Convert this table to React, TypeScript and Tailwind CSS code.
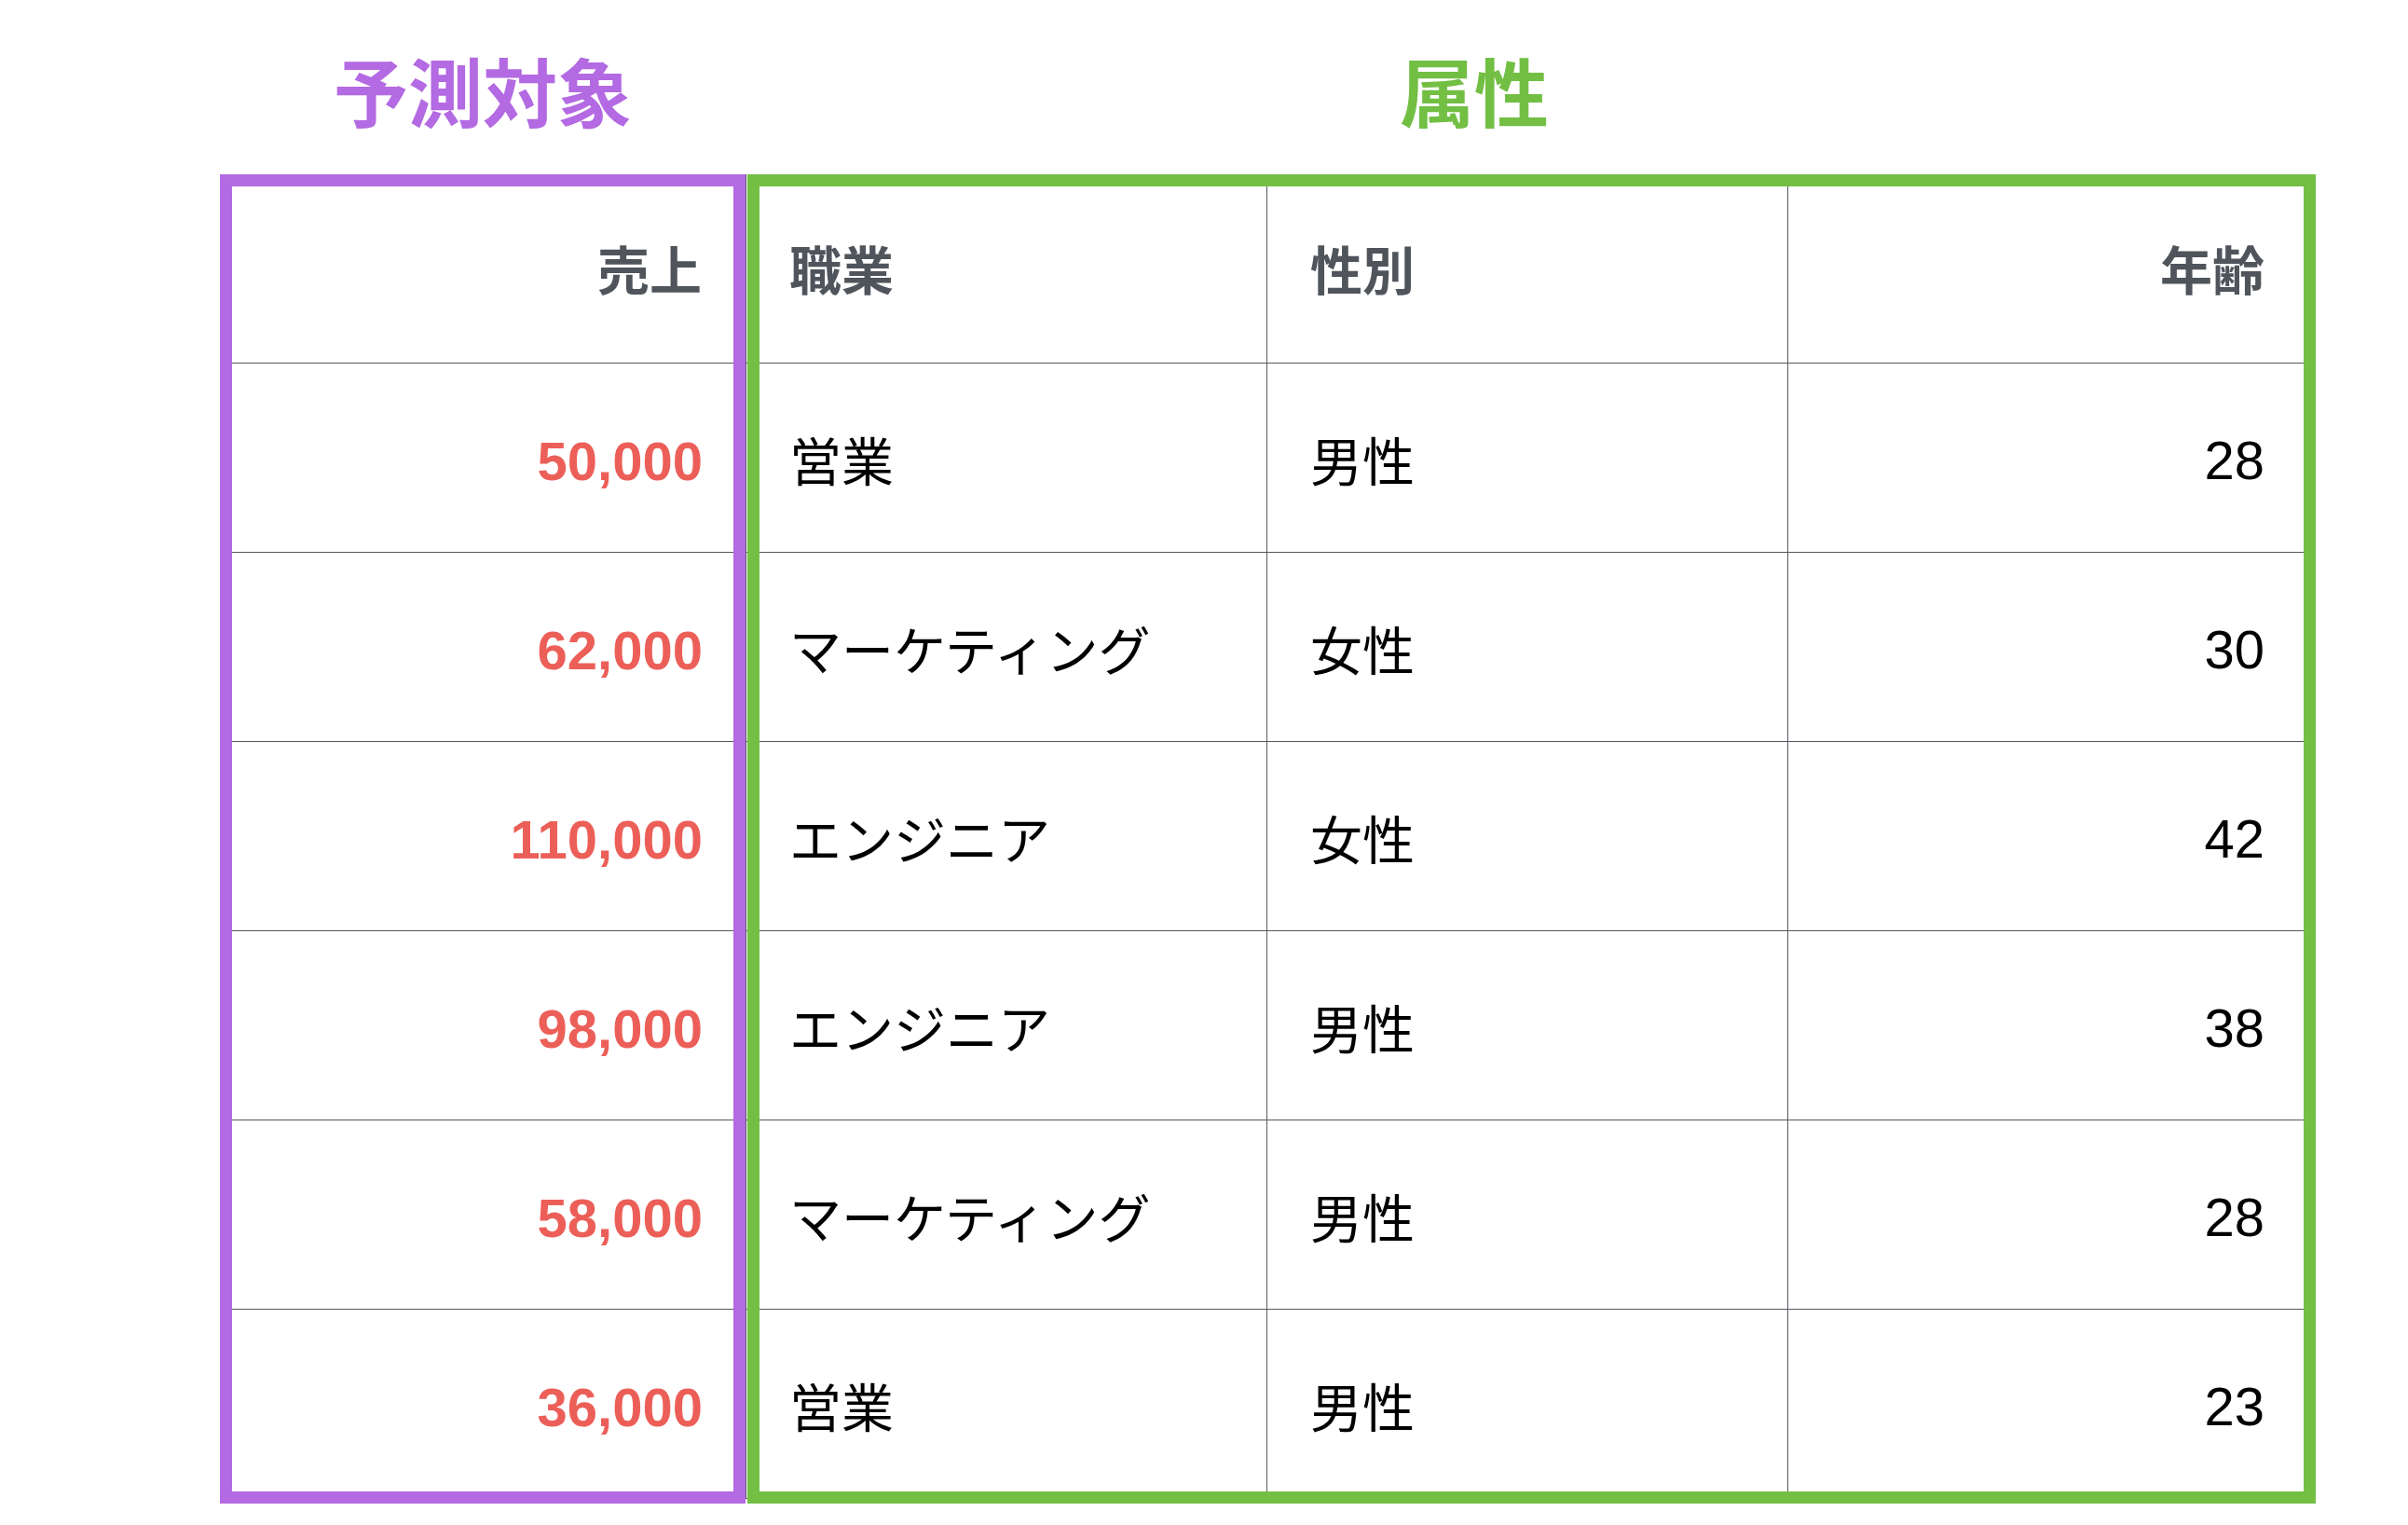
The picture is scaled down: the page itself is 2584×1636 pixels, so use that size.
import React from "react";

type Row = { sales: string; job: string; gender: string; age: string };

const rows: Row[] = [
  { sales: "50,000", job: "営業", gender: "男性", age: "28" },
  { sales: "62,000", job: "マーケティング", gender: "女性", age: "30" },
  { sales: "110,000", job: "エンジニア", gender: "女性", age: "42" },
  { sales: "98,000", job: "エンジニア", gender: "男性", age: "38" },
  { sales: "58,000", job: "マーケティング", gender: "男性", age: "28" },
  { sales: "36,000", job: "営業", gender: "男性", age: "23" },
];

export default function App() {
  return (
    <div className="w-[2584px] h-[1636px] bg-white overflow-hidden font-['Liberation_Sans','Noto_Sans_CJK_JP',sans-serif]">
      {/* titles */}
      <div className="flex ml-[236px] mt-[55px] h-[80px] font-['Noto_Sans_CJK_JP',sans-serif] font-bold text-[80px] leading-[80px]">
        <div className="w-[564px] text-center text-[#b36ae2]">予測対象</div>
        <div className="w-[1564px] text-center text-[#72bf44]">属性</div>
      </div>

      {/* table with highlight frames */}
      <div className="relative ml-[236px] mt-[52px] w-[2249px] h-[1426px]">
        <div className="ml-[5px] mt-[2px] w-[2236px]">
          {/* header */}
          <div className="grid grid-cols-[559px_559px_559px_559px] h-[203px] border-b border-[#55595f] text-[#50555c] font-bold text-[56px]">
            <div className="flex items-center justify-end pt-[7px] pr-[47px]">売上</div>
            <div className="flex items-center pt-[7px] pl-[46px] border-l border-[#55595f]">職業</div>
            <div className="flex items-center pt-[7px] pl-[46px] border-l border-[#55595f]">性別</div>
            <div className="flex items-center justify-end pt-[7px] pr-[47px] border-l border-[#55595f]">年齢</div>
          </div>
          {rows.map((r, i) => (
            <div
              key={i}
              className="grid grid-cols-[559px_559px_559px_559px] h-[203px] border-b border-[#55595f] text-black"
            >
              <div className="flex items-center justify-end pt-[7px] pr-[46px] text-[58px] font-bold text-[#ec5f58]">
                {r.sales}
              </div>
              <div className="flex items-center pt-[2px] pl-[46px] border-l border-[#55595f] text-[56px] font-['Noto_Sans_CJK_JP',sans-serif]">
                {r.job}
              </div>
              <div className="flex items-center pt-[2px] pl-[46px] border-l border-[#55595f] text-[56px] font-['Noto_Sans_CJK_JP',sans-serif]">
                {r.gender}
              </div>
              <div className="flex items-center justify-end pt-[5px] pr-[47px] border-l border-[#55595f] text-[58px]">
                {r.age}
              </div>
            </div>
          ))}
        </div>

        {/* overlay frames */}
        <div className="absolute left-0 top-0 w-[564px] h-[1426px] border-[13px] border-[#b36ae2] pointer-events-none" />
        <div className="absolute left-[566px] top-0 w-[1683px] h-[1426px] border-[13px] border-[#72bf44] pointer-events-none" />
      </div>
    </div>
  );
}
